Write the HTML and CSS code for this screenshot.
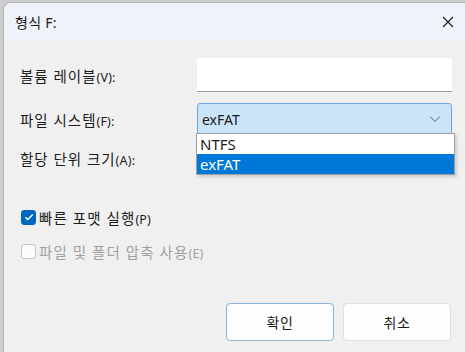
FILE: index.html
```html
<!DOCTYPE html>
<html lang="ko">
<head>
  <meta charset="UTF-8" />
  <title>형식 F:</title>
  <link rel="stylesheet" href="styles.css">
</head>
<body>
  <div class="dialog">
    <div class="titlebar">
      <span class="title">형식 F:</span>
      <svg class="close" width="12" height="12" viewBox="0 0 12 12">
        <path d="M1 1 L11 11 M11 1 L1 11" stroke="#1a1a1a" stroke-width="1.1" fill="none"/>
      </svg>
    </div>

    <div class="content">
      <div class="field-row row-volume">
        <label class="label">볼륨 레이블<span class="key">(V):</span></label>
        <div class="text-input"></div>
      </div>

      <div class="field-row row-fs">
        <label class="label">파일 시스템<span class="key">(F):</span></label>
        <div class="select-wrap">
          <div class="select">
            <span>exFAT</span>
            <svg class="chevron" width="12" height="8" viewBox="0 0 12 8">
              <path d="M1 1.5 L6 6.5 L11 1.5" stroke="#606060" stroke-width="1" fill="none"/>
            </svg>
          </div>
          <ul class="options">
            <li class="option">NTFS</li>
            <li class="option selected">exFAT</li>
          </ul>
        </div>
      </div>

      <div class="field-row row-alloc">
        <label class="label">할당 단위 크기<span class="key">(A):</span></label>
      </div>

      <div class="check-row">
        <span class="checkbox checked">
          <svg width="10" height="8" viewBox="0 0 10 8">
            <path d="M1.3 4.2 L3.8 6.5 L8.7 1.5" stroke="#fff" stroke-width="1.4" fill="none"/>
          </svg>
        </span>
        <span class="check-label">빠른 포맷 실행<span class="key">(P)</span></span>
      </div>

      <div class="check-row disabled">
        <span class="checkbox"></span>
        <span class="check-label">파일 및 폴더 압축 사용<span class="key">(E)</span></span>
      </div>

      <div class="button-group">
        <button class="btn default">확인</button>
        <button class="btn">취소</button>
      </div>
    </div>
  </div>
</body>
</html>
```

FILE: styles.css
```css
* {
  box-sizing: border-box;
}

body {
  margin: 0;
  padding: 2px 0 0 3px;
  background: #cdcdcd;
  font-family: "Noto Sans", "Noto Sans CJK KR", sans-serif;
  color: #1b1b1b;
  width: 465px;
  height: 352px;
  overflow: hidden;
}

.dialog {
  height: 360px;
  width: 470px;
  background: #f0f0f0;
  border: 1px solid #b4b4b4;
  border-right: none;
  border-radius: 8px 0 0 8px;
  overflow: hidden;
}

.titlebar {
  height: 38px;
  background: #eff2f8;
  display: flex;
  align-items: center;
  justify-content: space-between;
  padding: 0 18px 0 11px;
}

.title {
  font-size: 14px;
  letter-spacing: 0.3px;
}

.close {
  margin-right: 1px;
}

.content {
  padding: 17px 0 0 16px;
}

.field-row {
  display: flex;
  align-items: center;
}

.label {
  width: 177px;
  font-size: 14.5px;
  letter-spacing: 1px;
}

.key {
  font-size: 12.5px;
  letter-spacing: 0.2px;
}

.text-input {
  width: 255px;
  height: 34px;
  background: #fff;
  border-bottom: 1px solid #9a9a9a;
  border-radius: 3px 3px 0 0;
}

.row-fs {
  margin-top: 11px;
}

.select-wrap {
  position: relative;
}

.select {
  width: 255px;
  height: 32px;
  background: #cce4f7;
  border: 1px solid #6aa6e0;
  border-radius: 3px;
  display: flex;
  align-items: center;
  justify-content: space-between;
  padding: 0 10px 0 4px;
  font-size: 14px;
}

.options {
  position: absolute;
  left: -1px;
  top: 30px;
  width: 259px;
  margin: 0;
  padding: 0;
  list-style: none;
  background: #fff;
  border: 1px solid #a0a0a0;
  box-shadow: 2px 2px 3px rgba(0, 0, 0, 0.15);
  font-size: 15px;
}

.option {
  height: 20px;
  line-height: 20px;
  padding-left: 3px;
}

.option.selected {
  background: #0078d7;
  color: #fff;
}

.row-alloc {
  height: 30px;
  margin-top: 8px;
}

.check-row {
  display: flex;
  align-items: center;
  margin-top: 36px;
  margin-left: 1px;
  height: 16px;
}

.check-row.disabled {
  margin-top: 18px;
  color: #a0a0a0;
}

.checkbox {
  width: 15px;
  height: 15px;
  border-radius: 3px;
  border: 1px solid #c6c6c6;
  background: #fbfbfb;
  display: flex;
  align-items: center;
  justify-content: center;
  margin-right: 3px;
}

.checkbox.checked {
  background: #0067c0;
  border-color: #0067c0;
}

.check-label {
  font-size: 14.5px;
  letter-spacing: 1.1px;
}

.button-group {
  display: flex;
  gap: 9px;
  margin-top: 44px;
  margin-left: 206px;
}

.btn {
  width: 108px;
  height: 38px;
  background: #fdfdfd;
  border: 1px solid #e0e0e0;
  border-radius: 4px;
  font-family: "Noto Sans CJK KR", sans-serif;
  font-size: 14px;
  letter-spacing: 0.5px;
  color: #1b1b1b;
}

.btn.default {
  border-color: #8ab4dc;
}
```
